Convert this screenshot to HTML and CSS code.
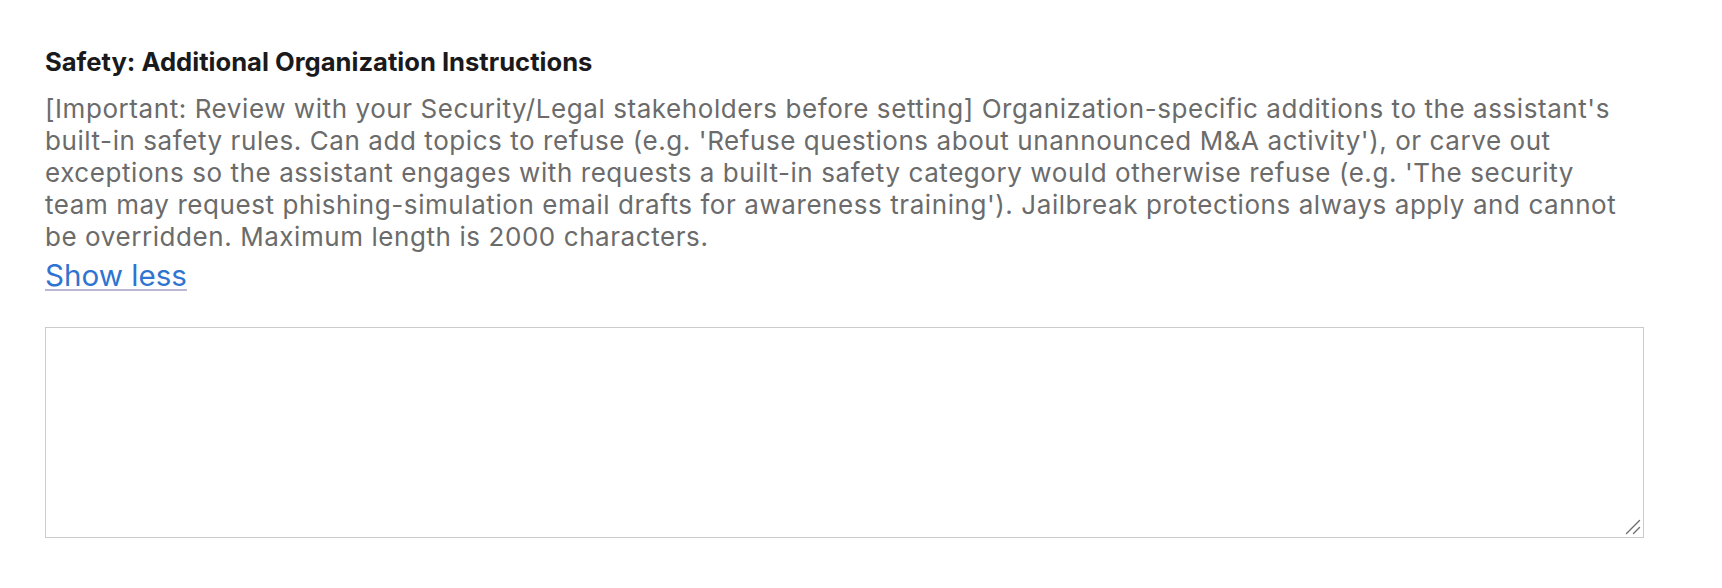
FILE: index.html
```html
<!DOCTYPE html>
<html lang="en">
<head>
<meta charset="utf-8">
<title>Safety: Additional Organization Instructions</title>
<link rel="stylesheet" href="styles.css">
</head>
<body>
<main class="page">
  <section class="field">
    <label class="field-title" for="safety-instructions">Safety: Additional Organization Instructions</label>
    <p class="field-desc">[Important: Review with your Security/Legal stakeholders before setting] Organization-specific additions to the assistant's built-in safety rules. Can add topics to refuse (e.g. 'Refuse questions about unannounced M&amp;A activity'), or carve out exceptions so the assistant engages with requests a built-in safety category would otherwise refuse (e.g. 'The security team may request phishing-simulation email drafts for awareness training'). Jailbreak protections always apply and cannot be overridden. Maximum length is 2000 characters.</p>
    <div class="toggle-row"><a class="toggle-link" href="#">Show less</a></div>
    <div class="input-wrap">
      <textarea class="field-input" id="safety-instructions"></textarea>
      <svg class="grip" width="16" height="16" viewBox="0 0 16 16" aria-hidden="true">
        <line x1="1.5" y1="14.5" x2="14.5" y2="1.5" />
        <line x1="8.5" y1="14.5" x2="14.5" y2="8.5" />
      </svg>
    </div>
  </section>
</main>
</body>
</html>
```
FILE: styles.css
```css
html, body {
  margin: 0;
  padding: 0;
  background: #ffffff;
}

body {
  font-family: Inter, "Noto Sans", sans-serif;
}

.page {
  padding: 45.5px 0 0 45px;
}

.field {
  width: 1598px;
  display: flex;
  flex-direction: column;
}

.field-title {
  display: block;
  font-size: 25.6px;
  line-height: 32px;
  font-weight: 700;
  color: #1a1a1c;
  margin: 0 0 15px 0;
}

.field-desc {
  margin: 0;
  font-size: 26px;
  line-height: 32px;
  letter-spacing: 0.57px;
  color: #6b6b6b;
}

.toggle-row {
  margin-top: 4.5px;
  line-height: 36px;
  height: 36px;
}

.toggle-link {
  font-size: 29.6px;
  color: #2f74d0;
  text-decoration: underline;
  text-decoration-color: #b9b7d2;
  text-decoration-thickness: 2px;
  text-underline-offset: 3px;
}

.input-wrap {
  position: relative;
  margin-top: 34px;
  width: 1599px;
  height: 211px;
}

.field-input {
  display: block;
  box-sizing: border-box;
  width: 100%;
  height: 100%;
  margin: 0;
  border: 1.5px solid #cbcbcb;
  border-radius: 0;
  background: #ffffff;
  padding: 8px;
  font-family: Inter, sans-serif;
  font-size: 20px;
  resize: none;
  outline: none;
}

.grip {
  position: absolute;
  right: 3px;
  bottom: 3px;
  pointer-events: none;
}

.grip line {
  stroke: #6e6e6e;
  stroke-width: 1.4;
  stroke-linecap: round;
}
```
